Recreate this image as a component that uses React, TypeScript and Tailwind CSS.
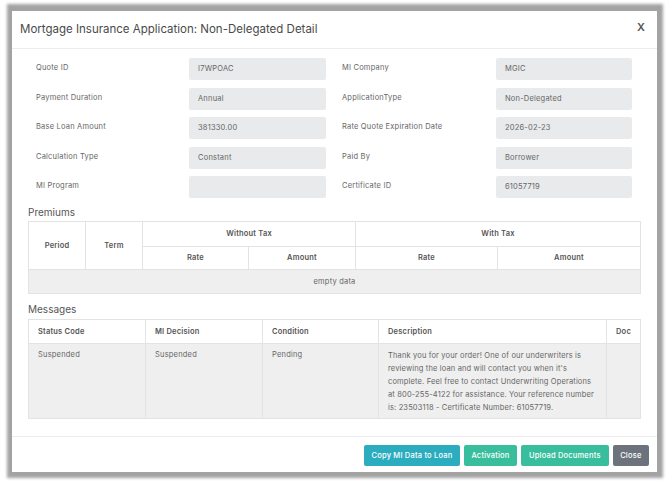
import React from "react";

const font = { fontFamily: "Inter, 'Noto Sans', sans-serif" };

const left = [
  ["Quote ID", "I7WPOAC"],
  ["Payment Duration", "Annual"],
  ["Base Loan Amount", "381330.00"],
  ["Calculation Type", "Constant"],
  ["MI Program", ""],
];
const right = [
  ["MI Company", "MGIC"],
  ["ApplicationType", "Non-Delegated"],
  ["Rate Quote Expiration Date", "2026-02-23"],
  ["Paid By", "Borrower"],
  ["Certificate ID", "61057719"],
];

function Field({ label, value, lw, iw }: { label: string; value: string; lw: string; iw: string }) {
  return (
    <div className="flex items-center h-[22px]">
      <div className={`${lw} text-[7.5px] tracking-[0.2px] text-[#666] -mt-[2px]`}>{label}</div>
      <div className={`${iw} h-[22px] bg-[#e9eaec] rounded-[2px] flex items-center pl-[9px] text-[7.5px] tracking-[0.2px] text-[#666]`}>{value}</div>
    </div>
  );
}

export default function App() {
  return (
    <div className="w-[670px] h-[485px] bg-white relative overflow-hidden" style={font}>
      <div className="absolute left-[7px] top-[4px] w-[656px] h-[474px] bg-[#a3a3a3] blur-[1.5px]" />
      <div className="absolute left-[12px] top-[11px] w-[645px] h-[461px] bg-white flex flex-col">
        {/* header */}
        <div className="h-[38px] flex items-center justify-between pl-[8px] pr-[12px] border-b border-[#ececec]">
          <div className="text-[11.5px] text-[#4a4a4a]">Mortgage Insurance Application: Non-Delegated Detail</div>
          <div className="text-[11px] text-[#555] font-semibold -mt-[5px]">X</div>
        </div>
        {/* body */}
        <div className="flex-1 px-[16px] pt-[9px] tracking-[0.2px]">
          <div className="flex pl-[8px]">
            <div className="flex flex-col gap-y-[7.5px]">
              {left.map(([l, v]) => (
                <Field key={l} label={l} value={v} lw="w-[153px]" iw="w-[137px]" />
              ))}
            </div>
            <div className="flex flex-col gap-y-[7.5px] ml-[16px]">
              {right.map(([l, v]) => (
                <Field key={l} label={l} value={v} lw="w-[154px]" iw="w-[136px]" />
              ))}
            </div>
          </div>
          <div className="text-[10px] text-[#555] mt-[6px] h-[16px] leading-[16px] tracking-normal">Premiums</div>
          <table className="w-[612px] mt-[1px] border-collapse text-[7.5px] text-[#555] table-fixed">
            <colgroup>
              <col className="w-[57px]" />
              <col className="w-[57px]" />
              <col className="w-[106px]" />
              <col className="w-[107px]" />
              <col className="w-[142px]" />
              <col className="w-[143px]" />
            </colgroup>
            <thead>
              <tr className="h-[25px]">
                <th rowSpan={2} className="border border-[#e3e3e3] font-semibold">Period</th>
                <th rowSpan={2} className="border border-[#e3e3e3] font-semibold">Term</th>
                <th colSpan={2} className="border border-[#e3e3e3] font-semibold">Without Tax</th>
                <th colSpan={2} className="border border-[#e3e3e3] font-semibold">With Tax</th>
              </tr>
              <tr className="h-[23px]">
                <th className="border border-[#e3e3e3] font-semibold">Rate</th>
                <th className="border border-[#e3e3e3] font-semibold">Amount</th>
                <th className="border border-[#e3e3e3] font-semibold">Rate</th>
                <th className="border border-[#e3e3e3] font-semibold">Amount</th>
              </tr>
            </thead>
            <tbody>
              <tr className="h-[24px] bg-[#efefef]">
                <td colSpan={6} className="text-center text-[#666] border border-[#e3e3e3]">empty data</td>
              </tr>
            </tbody>
          </table>
          <div className="text-[10px] text-[#555] mt-[7px] h-[16px] leading-[16px] tracking-normal">Messages</div>
          <table className="w-[612px] mt-[2px] border-collapse text-[7.5px] text-[#555] table-fixed">
            <colgroup>
              <col className="w-[117px]" />
              <col className="w-[117px]" />
              <col className="w-[116px]" />
              <col className="w-[228px]" />
              <col className="w-[34px]" />
            </colgroup>
            <thead>
              <tr className="h-[24px] text-left">
                <th className="border border-[#e3e3e3] font-semibold pl-[9px]">Status Code</th>
                <th className="border border-[#e3e3e3] font-semibold pl-[9px]">MI Decision</th>
                <th className="border border-[#e3e3e3] font-semibold pl-[9px]">Condition</th>
                <th className="border border-[#e3e3e3] font-semibold pl-[9px]">Description</th>
                <th className="border border-[#e3e3e3] font-semibold pl-[9px]">Doc</th>
              </tr>
            </thead>
            <tbody>
              <tr className="h-[75px] bg-[#efefef] align-top text-[#666]">
                <td className="border border-[#e3e3e3] pl-[9px] pt-[5px]">Suspended</td>
                <td className="border border-[#e3e3e3] pl-[9px] pt-[5px]">Suspended</td>
                <td className="border border-[#e3e3e3] pl-[9px] pt-[5px]">Pending</td>
                <td className="border border-[#e3e3e3] pl-[9px] pr-[8px] pt-[5px] leading-[13px] tracking-[0.15px]">
                  Thank you for your order! One of our underwriters is reviewing the loan and will contact you when it's complete. Feel free to contact Underwriting Operations at 800-255-4122 for assistance. Your reference number is: 23503118 - Certificate Number: 61057719.
                </td>
                <td className="border border-[#e3e3e3]"></td>
              </tr>
            </tbody>
          </table>
        </div>
        {/* footer */}
        <div className="h-[36px] border-t border-[#ececec] flex items-start justify-end gap-[4px] pr-[8px] pt-[8px] tracking-[0.2px]">
          <button className="h-[21px] px-[7.5px] rounded-[2px] bg-[#2cadbf] text-white text-[7.5px] font-medium">Copy MI Data to Loan</button>
          <button className="h-[21px] px-[7.5px] rounded-[2px] bg-[#38be9c] text-white text-[7.5px] font-medium">Activation</button>
          <button className="h-[21px] px-[8px] rounded-[2px] bg-[#38be9c] text-white text-[7.5px] font-medium">Upload Documents</button>
          <button className="h-[21px] px-[7.5px] rounded-[2px] bg-[#6c737c] text-white text-[7.5px] font-medium">Close</button>
        </div>
      </div>
    </div>
  );
}
